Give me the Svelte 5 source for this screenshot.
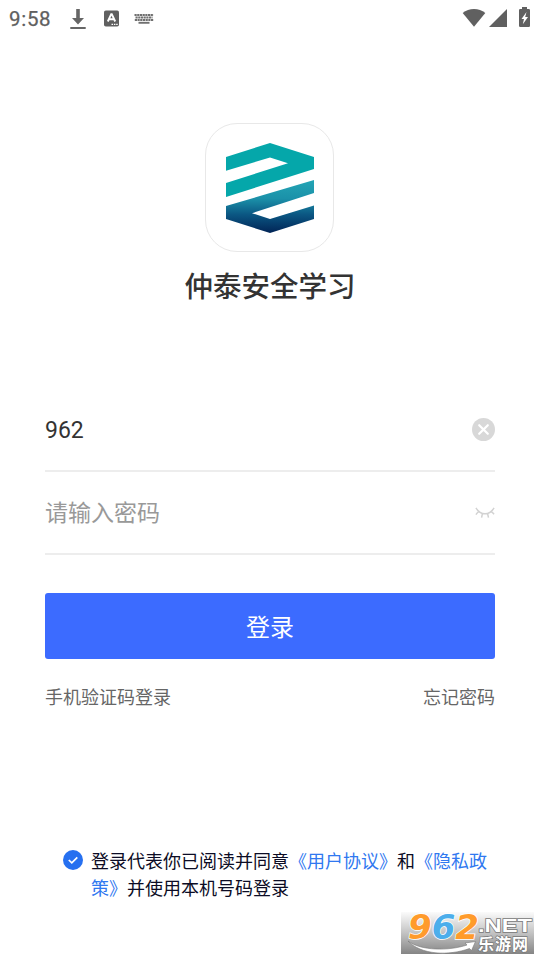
<script>
  let account = $state('962');
  let password = $state('');
  let agreed = $state(true);
</script>

<div class="screen">
  <header class="status">
    <span class="time">9:58</span>
    <svg class="download" width="16" height="22" viewBox="0 0 16 22" fill="#666"><path d="M6.200 0h3.600v9h4.200L8 15.500 2 9h4.200zM.3 18h15.400v2H.3z" /></svg>
    <svg class="input-lang" width="15" height="17" viewBox="0 0 15 17">
      <rect x="0" y=".5" width="15" height="16" rx="1.800" fill="#606060" />
      <path d="M3.800 11.500 7.200 4.200h.6l3.400 7.300M5 9.300h5" fill="none" stroke="#fff" stroke-width="1.900" />
      <path d="M7.500 14.300h1.500M9.900 14.300h1.500M12.200 14.300h1.500" stroke="#fff" stroke-width="1.300" />
    </svg>
    <svg class="keyboard" width="20" height="12" viewBox="0 0 20 12" stroke="#707070" fill="none">
      <path d="M.5 2h19" stroke-width="1.900" stroke-dasharray="2.200 .5" />
      <path d="M1.500 4.500h17" stroke-width="1.900" stroke-dasharray="2.200 .5" />
      <path d="M.8 7h18.400" stroke-width="1.900" stroke-dasharray="2.200 .5" />
      <path d="M4.500 9.800h11" stroke-width="1.900" />
    </svg>
    <span class="spacer"></span>
    <svg class="wifi" width="24" height="20" viewBox="0 0 24 20" fill="#606060"><path d="M.7 5.100C7-.4 17-.4 23.300 5.100L12 18.800z" /></svg>
    <svg class="signal" width="19" height="20" viewBox="0 0 19 20" fill="#606060"><path d="M18 1v18H0z" /></svg>
    <svg class="battery" width="11" height="20" viewBox="0 0 11 20">
      <path d="M3 0h5v2h1.800q1.200 0 1.200 1.200v15.600q0 1.200-1.200 1.200H1.200Q0 20 0 18.800V3.200Q0 2 1.200 2H3z" fill="#606060" />
      <path d="M7.500 5 2.500 12h2.500L3.800 17.200 9 10H6.200z" fill="#fff" />
    </svg>
  </header>

  <section class="brand">
    <div class="logo">
      <svg width="88" height="91" viewBox="0 0 88 91">
        <defs>
          <linearGradient id="deep" x1="0" y1="37" x2="0" y2="90" gradientUnits="userSpaceOnUse">
            <stop offset="0" stop-color="#23a5b5" />
            <stop offset=".35" stop-color="#1b91a9" />
            <stop offset=".65" stop-color="#0b5783" />
            <stop offset="1" stop-color="#012456" />
          </linearGradient>
        </defs>
        <path d="M0 14 44 0 88 14V26L0 54V40L62 20.300 44 14.500 0 27.700z" fill="#05a7aa" />
        <path d="M88 37V50L26 70.200 44 76 88 62.500V76L44 90 0 76V63z" fill="url(#deep)" />
      </svg>
    </div>
    <h1>仲泰安全学习</h1>
  </section>

  <main>
    <div class="field">
      <input type="text" bind:value={account} aria-label="账号" />
      <button class="bare" aria-label="清除" onclick={() => (account = '')}>
        <svg width="23" height="23" viewBox="0 0 23 23"><circle cx="11.500" cy="11.500" r="11.500" fill="#d8d8d8" /><path d="m7.200 7.200 8.600 8.600M15.800 7.200l-8.600 8.600" stroke="#fff" stroke-width="2.200" stroke-linecap="round" /></svg>
      </button>
    </div>
    <div class="field">
      <input type="password" bind:value={password} placeholder="请输入密码" />
      <svg width="20" height="12" viewBox="0 0 20 12" fill="none" stroke="#d2d2d2" stroke-width="1.500"><path d="M1 .8Q4.300 6.800 10 6.800T19 .8M3.500 4.400.9 7.600M7.400 6.600l-.8 4M12.600 6.600l.9 4M16.500 4.400l2.600 2.800" /></svg>
    </div>
    <button class="login">登录</button>
    <div class="links"><span>手机验证码登录</span><span>忘记密码</span></div>
  </main>

  <div class="agreement">
    <button class="bare check" aria-label="同意" aria-pressed={agreed} onclick={() => (agreed = !agreed)}>
      <svg width="20" height="20" viewBox="0 0 20 20"><circle cx="10" cy="10" r="10" fill={agreed ? '#2670f0' : '#ccc'} /><path d="m5.800 10 3 2.900 5.500-5.500" fill="none" stroke="#fff" stroke-width="1.700" /></svg>
    </button>
    <p>登录代表你已阅读并同意<a href="#terms">《用户协议》</a>和<a href="#privacy">《隐私政策》</a>并使用本机号码登录</p>
  </div>

  <div class="watermark">
    <svg width="133" height="42" viewBox="0 0 133 42">
      <defs>
        <linearGradient id="haze" x1="0" y1="0" x2="0" y2="1">
          <stop offset="0" stop-color="#fbfbfb" />
          <stop offset=".5" stop-color="#c3c3c3" />
          <stop offset="1" stop-color="#858585" />
        </linearGradient>
      </defs>
      <rect width="133" height="42" fill="url(#haze)" />
      <path d="M7 29C20 39 48 39 66 33l-2-2 10.500-1.500-4 9-2-2C48 44 20 43 7 29z" fill="#fff" stroke="#777" stroke-width=".6" />
      <text class="digits" x="7" y="26.500" textLength="71" lengthAdjust="spacingAndGlyphs"><tspan fill="#ff9b2b">9</tspan><tspan fill="#4caeeb">6</tspan><tspan fill="#ff9b2b">2</tspan></text>
      <text class="net" x="77" y="20" textLength="54" lengthAdjust="spacingAndGlyphs">.NET</text>
      <text class="site" x="77" y="37.500" textLength="50">乐游网</text>
    </svg>
  </div>
</div>

<style>
  :global(body) { margin: 0; background: #fff; }
  .screen {
    position: relative;
    box-sizing: border-box;
    width: 540px;
    height: 960px;
    overflow: hidden;
    background: #fff;
    font-family: Roboto, "Noto Sans CJK SC", sans-serif;
    color: #333;
  }
  svg { display: block; flex: none; }
  .status { display: flex; align-items: center; height: 36px; padding: 0 10px 0 9px; }
  .time { width: 61px; font-size: 20.500px; font-weight: 400; letter-spacing: .7px; color: #606060; -webkit-text-stroke: .25px #606060; line-height: 36px; padding-top: 2px; }
  .download { margin-top: 3px; }
  .input-lang { margin-left: 18px; }
  .keyboard { margin-left: 15px; margin-top: 1px; }
  .spacer { flex: 1; }
  .wifi { margin-top: -1px; }
  .signal { margin-left: 3px; margin-top: -1px; }
  .battery { margin-left: 11px; margin-top: -2px; }
  .brand { display: flex; flex-direction: column; align-items: center; padding-top: 87px; }
  .logo {
    box-sizing: border-box;
    display: flex;
    align-items: center;
    justify-content: center;
    width: 129px;
    height: 129px;
    padding-top: 1px;
    border: 1px solid #e8e8e8;
    border-radius: 32px;
    margin-right: 1px;
  }
  h1 { margin: 15px 0 0; font-size: 28.500px; line-height: 42px; font-weight: 500; }
  main { padding: 80px 45px 0; }
  .field {
    box-sizing: border-box;
    display: flex;
    align-items: center;
    height: 83px;
    border-bottom: 2px solid #ededed;
  }
  input {
    flex: 1;
    min-width: 0;
    padding: 2px 0 0;
    border: 0;
    outline: 0;
    background: none;
    font: 23px/34px Roboto, "Noto Sans CJK SC", sans-serif;
    color: #333;
  }
  input::placeholder { color: #999; opacity: 1; }
  .bare { padding: 0; border: 0; background: none; }
  .login {
    display: block;
    width: 100%;
    height: 66px;
    margin-top: 38px;
    padding: 0;
    border: 0;
    border-radius: 3px;
    background: #3c6bff;
    color: #fff;
    font: 24px/66px "Noto Sans CJK SC", sans-serif;
  }
  .links { display: flex; justify-content: space-between; margin-top: 25px; font-size: 18px; line-height: 27px; color: #666; }
  .agreement { display: flex; gap: 8px; width: 426px; margin: 137px 0 0 63px; }
  .check { height: 20px; margin-top: 2px; }
  p { width: 398px; margin: 0; font-size: 18px; line-height: 27px; color: #0c0c25; }
  a { color: #3078f0; text-decoration: none; }
  .watermark { position: absolute; left: 401px; top: 912px; }
  .watermark svg { overflow: visible; }
  .digits {
    font: italic 700 34px "DejaVu Sans", sans-serif;
    stroke: #fff;
    stroke-width: 1.500px;
    paint-order: stroke;
  }
  .net { font: 700 18px "Liberation Sans", sans-serif; fill: #fff; stroke: #777; stroke-width: 1.300px; paint-order: stroke; }
  .site { font: 700 16px "Noto Sans CJK SC", sans-serif; fill: #fff; stroke: #777; stroke-width: 1.300px; paint-order: stroke; }
</style>
